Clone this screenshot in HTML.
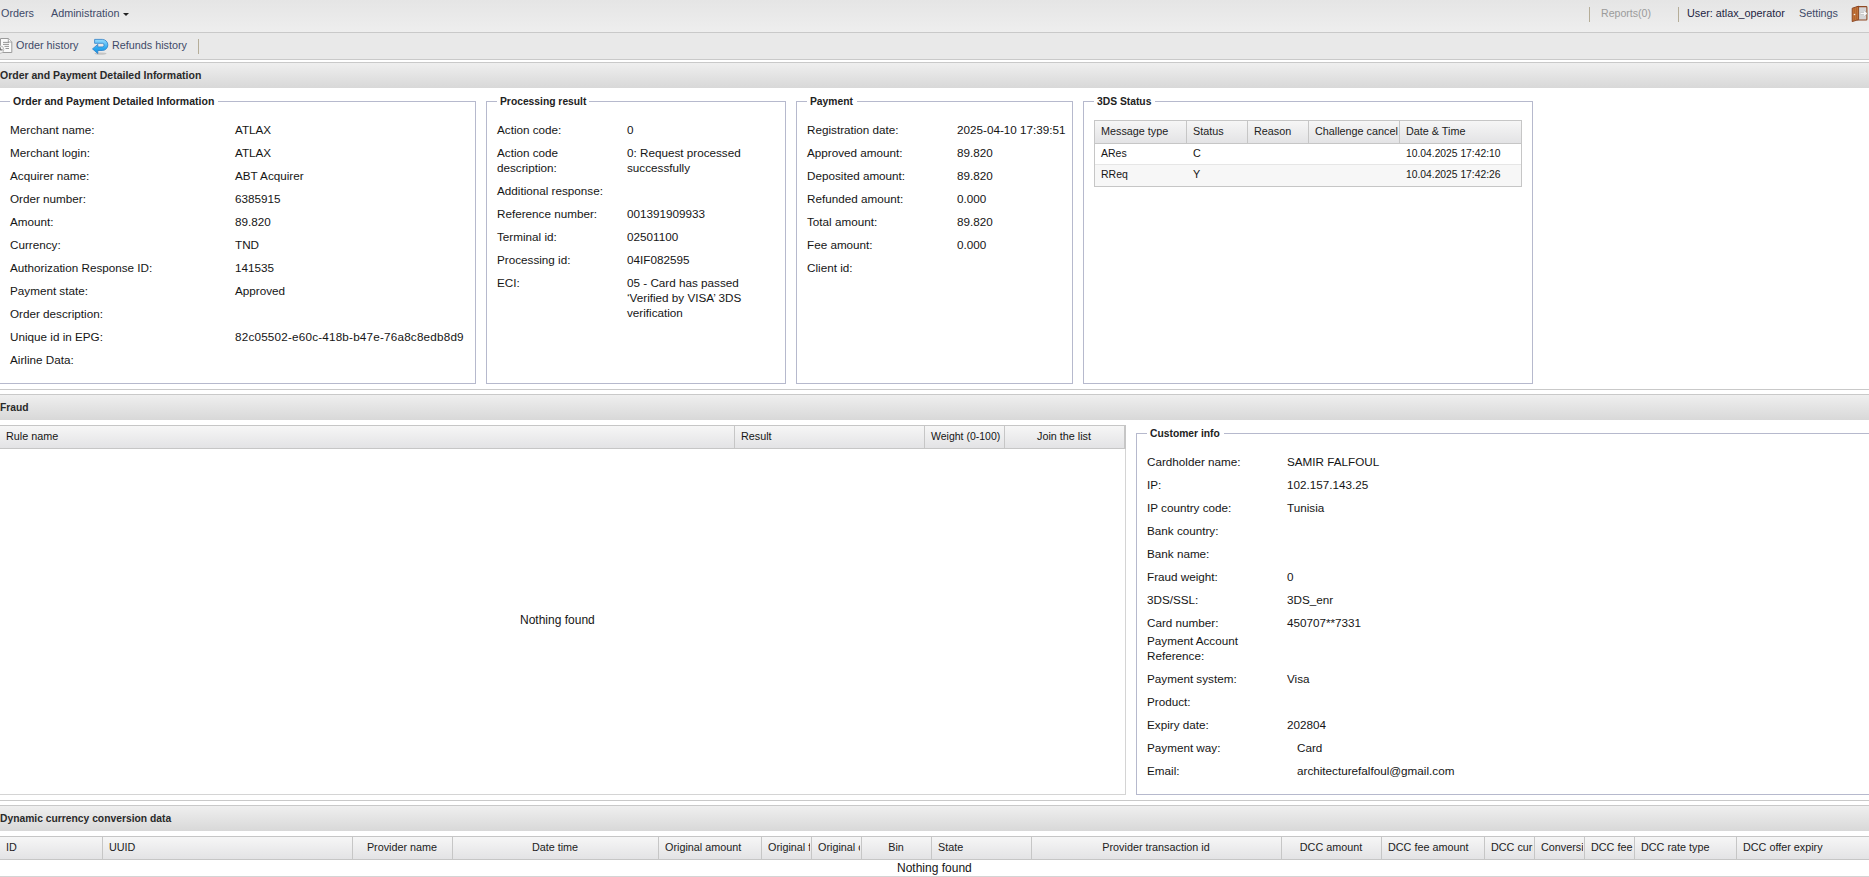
<!DOCTYPE html>
<html><head><meta charset="utf-8"><title>Order details</title>
<style>
html,body{margin:0;padding:0;background:#fff;width:1869px;height:877px;overflow:hidden;position:relative}
body{font-family:"Liberation Sans",sans-serif}
.t{position:absolute;white-space:nowrap}
.r{position:absolute}
</style></head><body>
<div class="r" style="left:0px;top:0px;width:1869px;height:32px;background:linear-gradient(#e5e5e5,#eeeeee)"></div>
<div class="r" style="left:0px;top:32px;width:1869px;height:1px;background:#c9c9c9"></div>
<div class="t" style="left:1px;top:5.76px;font-size:10.8px;line-height:15px;color:#3e4a68;">Orders</div>
<div class="t" style="left:51px;top:5.76px;font-size:10.8px;line-height:15px;color:#3e4a68;">Administration</div>
<div class="r" style="left:123px;top:13px;width:0;height:0;border-left:3px solid transparent;border-right:3px solid transparent;border-top:3px solid #222"></div>
<div class="r" style="left:1589px;top:7px;width:1px;height:15px;background:#b5ad98"></div>
<div class="t" style="left:1601px;top:5.83px;font-size:10.6px;line-height:15px;color:#9b9b9b;">Reports(0)</div>
<div class="r" style="left:1678px;top:7px;width:1px;height:15px;background:#b5ad98"></div>
<div class="t" style="left:1687px;top:5.76px;font-size:10.8px;line-height:15px;color:#1d2442;">User: atlax_operator</div>
<div class="t" style="left:1799px;top:5.76px;font-size:10.8px;line-height:15px;color:#3e4a68;">Settings</div>
<svg class="r" style="left:1845px;top:2px" width="24" height="24" viewBox="0 0 24 24">
<rect x="11.9" y="4.6" width="10" height="13.4" rx="0.8" fill="#d4d6d8" stroke="#8f4a24" stroke-width="1.1"/>
<polygon points="7.2,6.2 13.6,4.2 13.6,17.6 7.2,19.6" fill="#c27338" stroke="#86401c" stroke-width="0.9"/>
<line x1="9.4" y1="6" x2="9.4" y2="18.5" stroke="#a85a2a" stroke-width="0.6"/>
<line x1="11.5" y1="5.3" x2="11.5" y2="18" stroke="#a85a2a" stroke-width="0.6"/>
<circle cx="9.5" cy="12.5" r="0.8" fill="#f0f0f0"/>
<path d="M15.5 11.5 H21 M19 9.5 L21.2 11.5 L19 13.5" stroke="#9a9a9a" stroke-width="2.4" fill="none" opacity="0.6"/>
<path d="M15.5 11.5 H21 M19 9.5 L21.2 11.5 L19 13.5" stroke="#fafafa" stroke-width="1.3" fill="none"/>
</svg>
<div class="r" style="left:0px;top:33px;width:1869px;height:26px;background:#e9e9e9"></div>
<div class="r" style="left:0px;top:59px;width:1869px;height:1px;background:#c9c9c9"></div>
<div class="r" style="left:0px;top:60px;width:1869px;height:2px;background:#fff"></div>
<div class="r" style="left:0px;top:62px;width:1869px;height:1px;background:#c9c9c9"></div>
<svg class="r" style="left:0px;top:35px" width="16" height="22" viewBox="0 0 16 22">
<path d="M0.5 3.5 H8.5 L11.8 6.8 V17.5 H0.5 Z" fill="#fafafa" stroke="#9c9c9c" stroke-width="1"/>
<path d="M8.3 3.5 V7 H11.8" fill="#fff" stroke="#9c9c9c" stroke-width="0.9"/>
<path d="M3 7.4 H9 M3 9.4 H9 M4.5 11.4 H9 M5.5 13.5 H9" stroke="#8a8a8a" stroke-width="0.9"/>
<circle cx="0" cy="14.6" r="3.8" fill="#f4f4f4" stroke="#b8b8b8" stroke-width="0.9"/>
<path d="M0.2 12.3 V14.9 H2.6" stroke="#555" stroke-width="1" fill="none"/>
</svg>
<div class="t" style="left:16px;top:37.76px;font-size:10.8px;line-height:15px;color:#3e4a68;">Order history</div>
<svg class="r" style="left:88px;top:35px" width="24" height="22" viewBox="0 0 24 22">
<defs><linearGradient id="rg" x1="0" y1="0" x2="0" y2="1"><stop offset="0" stop-color="#98dcfd"/><stop offset="0.6" stop-color="#2eaaf0"/><stop offset="1" stop-color="#1590e0"/></linearGradient></defs>
<ellipse cx="12.5" cy="18.6" rx="6" ry="1.1" fill="#c4c4c4"/>
<path d="M6.6 4.4 H14.3 A5.55 5.55 0 0 1 14.3 15.5 H9.8 V18.6 L4.5 13.9 L9.8 9.4 V11.9 H14.3 A1.8 1.8 0 0 0 14.3 8.3 H6.6 Z" fill="url(#rg)" stroke="#2d7fc6" stroke-width="0.8" stroke-linejoin="round"/>
</svg>
<div class="t" style="left:112px;top:37.76px;font-size:10.8px;line-height:15px;color:#3e4a68;">Refunds history</div>
<div class="r" style="left:198px;top:39px;width:1px;height:15px;background:#b5ad98"></div>
<div class="r" style="left:0px;top:63px;width:1869px;height:25px;background:linear-gradient(#efefef,#d8d8d8)"></div>
<div class="t" style="left:0px;top:68.06px;font-size:10.5px;line-height:15px;color:#2a2a2a;font-weight:bold;">Order and Payment Detailed Information</div>
<div class="r" style="left:-1px;top:101px;width:477px;height:283px;box-sizing:border-box;border:1px solid #b6b9cd"></div>
<div class="r" style="left:10px;top:99px;width:208px;height:4px;background:#fff"></div>
<div class="t" style="left:13px;top:94.06px;font-size:10.5px;line-height:15px;color:#222;font-weight:bold;">Order and Payment Detailed Information</div>
<div class="r" style="left:486px;top:101px;width:300px;height:283px;box-sizing:border-box;border:1px solid #b6b9cd"></div>
<div class="r" style="left:497px;top:99px;width:92px;height:4px;background:#fff"></div>
<div class="t" style="left:500px;top:94.13px;font-size:10.3px;line-height:15px;color:#222;font-weight:bold;">Processing result</div>
<div class="r" style="left:796px;top:101px;width:277px;height:283px;box-sizing:border-box;border:1px solid #b6b9cd"></div>
<div class="r" style="left:807px;top:99px;width:50px;height:4px;background:#fff"></div>
<div class="t" style="left:810px;top:94.13px;font-size:10.3px;line-height:15px;color:#222;font-weight:bold;">Payment</div>
<div class="r" style="left:1083px;top:101px;width:450px;height:283px;box-sizing:border-box;border:1px solid #b6b9cd"></div>
<div class="r" style="left:1094px;top:99px;width:61px;height:4px;background:#fff"></div>
<div class="t" style="left:1097px;top:94.13px;font-size:10.3px;line-height:15px;color:#222;font-weight:bold;">3DS Status</div>
<div class="t" style="left:10px;top:122.44px;font-size:11.7px;line-height:15px;color:#151515;">Merchant name:</div>
<div class="t" style="left:235px;top:122.44px;font-size:11.7px;line-height:15px;color:#151515;">ATLAX</div>
<div class="t" style="left:10px;top:145.44px;font-size:11.7px;line-height:15px;color:#151515;">Merchant login:</div>
<div class="t" style="left:235px;top:145.44px;font-size:11.7px;line-height:15px;color:#151515;">ATLAX</div>
<div class="t" style="left:10px;top:168.44px;font-size:11.7px;line-height:15px;color:#151515;">Acquirer name:</div>
<div class="t" style="left:235px;top:168.44px;font-size:11.7px;line-height:15px;color:#151515;">ABT Acquirer</div>
<div class="t" style="left:10px;top:191.44px;font-size:11.7px;line-height:15px;color:#151515;">Order number:</div>
<div class="t" style="left:235px;top:191.44px;font-size:11.7px;line-height:15px;color:#151515;">6385915</div>
<div class="t" style="left:10px;top:214.44px;font-size:11.7px;line-height:15px;color:#151515;">Amount:</div>
<div class="t" style="left:235px;top:214.44px;font-size:11.7px;line-height:15px;color:#151515;">89.820</div>
<div class="t" style="left:10px;top:237.44px;font-size:11.7px;line-height:15px;color:#151515;">Currency:</div>
<div class="t" style="left:235px;top:237.44px;font-size:11.7px;line-height:15px;color:#151515;">TND</div>
<div class="t" style="left:10px;top:260.44px;font-size:11.7px;line-height:15px;color:#151515;">Authorization Response ID:</div>
<div class="t" style="left:235px;top:260.44px;font-size:11.7px;line-height:15px;color:#151515;">141535</div>
<div class="t" style="left:10px;top:283.44px;font-size:11.7px;line-height:15px;color:#151515;">Payment state:</div>
<div class="t" style="left:235px;top:283.44px;font-size:11.7px;line-height:15px;color:#151515;">Approved</div>
<div class="t" style="left:10px;top:306.44px;font-size:11.7px;line-height:15px;color:#151515;">Order description:</div>
<div class="t" style="left:10px;top:329.44px;font-size:11.7px;line-height:15px;color:#151515;">Unique id in EPG:</div>
<div class="t" style="left:235px;top:329.44px;font-size:11.7px;line-height:15px;color:#151515;letter-spacing:0.2px">82c05502-e60c-418b-b47e-76a8c8edb8d9</div>
<div class="t" style="left:10px;top:352.44px;font-size:11.7px;line-height:15px;color:#151515;">Airline Data:</div>
<div class="t" style="left:497px;top:122.44px;font-size:11.7px;line-height:15px;color:#151515;">Action code:</div>
<div class="t" style="left:627px;top:122.44px;font-size:11.7px;line-height:15px;color:#151515;">0</div>
<div class="t" style="left:497px;top:145.44px;font-size:11.7px;line-height:15px;color:#151515;">Action code</div>
<div class="t" style="left:497px;top:160.44px;font-size:11.7px;line-height:15px;color:#151515;">description:</div>
<div class="t" style="left:627px;top:145.44px;font-size:11.7px;line-height:15px;color:#151515;">0: Request processed</div>
<div class="t" style="left:627px;top:160.44px;font-size:11.7px;line-height:15px;color:#151515;">successfully</div>
<div class="t" style="left:497px;top:183.44px;font-size:11.7px;line-height:15px;color:#151515;">Additional response:</div>
<div class="t" style="left:497px;top:206.44px;font-size:11.7px;line-height:15px;color:#151515;">Reference number:</div>
<div class="t" style="left:627px;top:206.44px;font-size:11.7px;line-height:15px;color:#151515;">001391909933</div>
<div class="t" style="left:497px;top:229.44px;font-size:11.7px;line-height:15px;color:#151515;">Terminal id:</div>
<div class="t" style="left:627px;top:229.44px;font-size:11.7px;line-height:15px;color:#151515;">02501100</div>
<div class="t" style="left:497px;top:252.44px;font-size:11.7px;line-height:15px;color:#151515;">Processing id:</div>
<div class="t" style="left:627px;top:252.44px;font-size:11.7px;line-height:15px;color:#151515;">04IF082595</div>
<div class="t" style="left:497px;top:275.44px;font-size:11.7px;line-height:15px;color:#151515;">ECI:</div>
<div class="t" style="left:627px;top:275.44px;font-size:11.7px;line-height:15px;color:#151515;">05 - Card has passed</div>
<div class="t" style="left:627px;top:290.44px;font-size:11.7px;line-height:15px;color:#151515;">‘Verified by VISA’ 3DS</div>
<div class="t" style="left:627px;top:305.44px;font-size:11.7px;line-height:15px;color:#151515;">verification</div>
<div class="t" style="left:807px;top:122.44px;font-size:11.7px;line-height:15px;color:#151515;">Registration date:</div>
<div class="t" style="left:957px;top:122.44px;font-size:11.7px;line-height:15px;color:#151515;">2025-04-10 17:39:51</div>
<div class="t" style="left:807px;top:145.44px;font-size:11.7px;line-height:15px;color:#151515;">Approved amount:</div>
<div class="t" style="left:957px;top:145.44px;font-size:11.7px;line-height:15px;color:#151515;">89.820</div>
<div class="t" style="left:807px;top:168.44px;font-size:11.7px;line-height:15px;color:#151515;">Deposited amount:</div>
<div class="t" style="left:957px;top:168.44px;font-size:11.7px;line-height:15px;color:#151515;">89.820</div>
<div class="t" style="left:807px;top:191.44px;font-size:11.7px;line-height:15px;color:#151515;">Refunded amount:</div>
<div class="t" style="left:957px;top:191.44px;font-size:11.7px;line-height:15px;color:#151515;">0.000</div>
<div class="t" style="left:807px;top:214.44px;font-size:11.7px;line-height:15px;color:#151515;">Total amount:</div>
<div class="t" style="left:957px;top:214.44px;font-size:11.7px;line-height:15px;color:#151515;">89.820</div>
<div class="t" style="left:807px;top:237.44px;font-size:11.7px;line-height:15px;color:#151515;">Fee amount:</div>
<div class="t" style="left:957px;top:237.44px;font-size:11.7px;line-height:15px;color:#151515;">0.000</div>
<div class="t" style="left:807px;top:260.44px;font-size:11.7px;line-height:15px;color:#151515;">Client id:</div>
<div class="r" style="left:1094px;top:120px;width:428px;height:67px;box-sizing:border-box;border:1px solid #c6c6c6;background:#fff"></div>
<div class="r" style="left:1095px;top:121px;width:426px;height:22px;background:linear-gradient(#f6f6f6,#e3e3e5)"></div>
<div class="r" style="left:1095px;top:143px;width:426px;height:1px;background:#c6c6c6"></div>
<div class="r" style="left:1186px;top:121px;width:1px;height:22px;background:#c6c6c6"></div>
<div class="r" style="left:1247px;top:121px;width:1px;height:22px;background:#c6c6c6"></div>
<div class="r" style="left:1308px;top:121px;width:1px;height:22px;background:#c6c6c6"></div>
<div class="r" style="left:1399px;top:121px;width:1px;height:22px;background:#c6c6c6"></div>
<div class="r" style="left:1095px;top:165px;width:426px;height:21px;background:#f7f7f7"></div>
<div class="r" style="left:1095px;top:164px;width:426px;height:1px;background:#e6e6e6"></div>
<div class="t" style="left:1101px;top:123.76px;font-size:10.8px;line-height:15px;color:#222;">Message type</div>
<div class="t" style="left:1193px;top:123.76px;font-size:10.8px;line-height:15px;color:#222;">Status</div>
<div class="t" style="left:1254px;top:123.76px;font-size:10.8px;line-height:15px;color:#222;">Reason</div>
<div class="t" style="left:1315px;top:123.76px;font-size:10.8px;line-height:15px;color:#222;">Challenge cancel</div>
<div class="t" style="left:1406px;top:123.76px;font-size:10.8px;line-height:15px;color:#222;">Date &amp; Time</div>
<div class="t" style="left:1101px;top:145.86px;font-size:10.5px;line-height:15px;color:#151515;">ARes</div>
<div class="t" style="left:1193px;top:145.76px;font-size:10.8px;line-height:15px;color:#151515;">C</div>
<div class="t" style="left:1406px;top:145.93px;font-size:10.3px;line-height:15px;color:#151515;">10.04.2025 17:42:10</div>
<div class="t" style="left:1101px;top:166.86px;font-size:10.5px;line-height:15px;color:#151515;">RReq</div>
<div class="t" style="left:1193px;top:166.76px;font-size:10.8px;line-height:15px;color:#151515;">Y</div>
<div class="t" style="left:1406px;top:166.93px;font-size:10.3px;line-height:15px;color:#151515;">10.04.2025 17:42:26</div>
<div class="r" style="left:0px;top:389px;width:1869px;height:1px;background:#c9c9c9"></div>
<div class="r" style="left:0px;top:394px;width:1869px;height:1px;background:#c9c9c9"></div>
<div class="r" style="left:0px;top:395px;width:1869px;height:25px;background:linear-gradient(#efefef,#d8d8d8)"></div>
<div class="t" style="left:0px;top:400.13px;font-size:10.3px;line-height:15px;color:#2a2a2a;font-weight:bold;">Fraud</div>
<div class="r" style="left:0px;top:425px;width:1126px;height:24px;background:linear-gradient(#f6f6f6,#e3e3e5);border-top:1px solid #c6c6c6;border-bottom:1px solid #c6c6c6;box-sizing:border-box"></div>
<div class="r" style="left:1124px;top:425px;width:2px;height:24px;background:#c6c6c6"></div>
<div class="r" style="left:734px;top:426px;width:1px;height:22px;background:#c6c6c6"></div>
<div class="r" style="left:924px;top:426px;width:1px;height:22px;background:#c6c6c6"></div>
<div class="r" style="left:1004px;top:426px;width:1px;height:22px;background:#c6c6c6"></div>
<div class="t" style="left:6px;top:428.76px;font-size:10.8px;line-height:15px;color:#151515;">Rule name</div>
<div class="t" style="left:741px;top:428.76px;font-size:10.8px;line-height:15px;color:#151515;">Result</div>
<div class="t" style="left:931px;top:428.86px;font-size:10.5px;line-height:15px;color:#151515;">Weight (0-100)</div>
<div class="t" style="left:1037px;top:428.76px;font-size:10.8px;line-height:15px;color:#151515;">Join the list</div>
<div class="r" style="left:1125px;top:449px;width:1px;height:346px;background:#d4d4d4"></div>
<div class="r" style="left:0px;top:794px;width:1126px;height:1px;background:#d4d4d4"></div>
<div class="t" style="left:520px;top:613.34px;font-size:12.0px;line-height:15px;color:#151515;">Nothing found</div>
<div class="r" style="left:1136px;top:433px;width:745px;height:362px;box-sizing:border-box;border:1px solid #b6b9cd"></div>
<div class="r" style="left:1147px;top:431px;width:77px;height:4px;background:#fff"></div>
<div class="t" style="left:1150px;top:426.13px;font-size:10.3px;line-height:15px;color:#222;font-weight:bold;">Customer info</div>
<div class="t" style="left:1147px;top:454.44px;font-size:11.7px;line-height:15px;color:#151515;">Cardholder name:</div>
<div class="t" style="left:1287px;top:454.44px;font-size:11.7px;line-height:15px;color:#151515;">SAMIR FALFOUL</div>
<div class="t" style="left:1147px;top:477.44px;font-size:11.7px;line-height:15px;color:#151515;">IP:</div>
<div class="t" style="left:1287px;top:477.44px;font-size:11.7px;line-height:15px;color:#151515;">102.157.143.25</div>
<div class="t" style="left:1147px;top:500.44px;font-size:11.7px;line-height:15px;color:#151515;">IP country code:</div>
<div class="t" style="left:1287px;top:500.44px;font-size:11.7px;line-height:15px;color:#151515;">Tunisia</div>
<div class="t" style="left:1147px;top:523.44px;font-size:11.7px;line-height:15px;color:#151515;">Bank country:</div>
<div class="t" style="left:1147px;top:546.44px;font-size:11.7px;line-height:15px;color:#151515;">Bank name:</div>
<div class="t" style="left:1147px;top:569.44px;font-size:11.7px;line-height:15px;color:#151515;">Fraud weight:</div>
<div class="t" style="left:1287px;top:569.44px;font-size:11.7px;line-height:15px;color:#151515;">0</div>
<div class="t" style="left:1147px;top:592.44px;font-size:11.7px;line-height:15px;color:#151515;">3DS/SSL:</div>
<div class="t" style="left:1287px;top:592.44px;font-size:11.7px;line-height:15px;color:#151515;">3DS_enr</div>
<div class="t" style="left:1147px;top:615.44px;font-size:11.7px;line-height:15px;color:#151515;">Card number:</div>
<div class="t" style="left:1287px;top:615.44px;font-size:11.7px;line-height:15px;color:#151515;">450707**7331</div>
<div class="t" style="left:1147px;top:633.44px;font-size:11.7px;line-height:15px;color:#151515;">Payment Account</div>
<div class="t" style="left:1147px;top:648.44px;font-size:11.7px;line-height:15px;color:#151515;">Reference:</div>
<div class="t" style="left:1147px;top:671.44px;font-size:11.7px;line-height:15px;color:#151515;">Payment system:</div>
<div class="t" style="left:1287px;top:671.44px;font-size:11.7px;line-height:15px;color:#151515;">Visa</div>
<div class="t" style="left:1147px;top:694.44px;font-size:11.7px;line-height:15px;color:#151515;">Product:</div>
<div class="t" style="left:1147px;top:717.44px;font-size:11.7px;line-height:15px;color:#151515;">Expiry date:</div>
<div class="t" style="left:1287px;top:717.44px;font-size:11.7px;line-height:15px;color:#151515;">202804</div>
<div class="t" style="left:1147px;top:740.44px;font-size:11.7px;line-height:15px;color:#151515;">Payment way:</div>
<div class="t" style="left:1297px;top:740.44px;font-size:11.7px;line-height:15px;color:#151515;">Card</div>
<div class="t" style="left:1147px;top:763.44px;font-size:11.7px;line-height:15px;color:#151515;">Email:</div>
<div class="t" style="left:1297px;top:763.44px;font-size:11.7px;line-height:15px;color:#151515;">architecturefalfoul@gmail.com</div>
<div class="r" style="left:0px;top:800px;width:1869px;height:1px;background:#c9c9c9"></div>
<div class="r" style="left:0px;top:805px;width:1869px;height:1px;background:#c9c9c9"></div>
<div class="r" style="left:0px;top:806px;width:1869px;height:25px;background:linear-gradient(#efefef,#d8d8d8)"></div>
<div class="t" style="left:0px;top:811.13px;font-size:10.3px;line-height:15px;color:#2a2a2a;font-weight:bold;">Dynamic currency conversion data</div>
<div class="r" style="left:0px;top:836px;width:1869px;height:24px;background:linear-gradient(#f6f6f6,#e3e3e5);border-top:1px solid #c6c6c6;border-bottom:1px solid #c6c6c6;box-sizing:border-box"></div>
<div class="r" style="left:102px;top:837px;width:1px;height:22px;background:#c6c6c6"></div>
<div class="r" style="left:352px;top:837px;width:1px;height:22px;background:#c6c6c6"></div>
<div class="r" style="left:452px;top:837px;width:1px;height:22px;background:#c6c6c6"></div>
<div class="r" style="left:658px;top:837px;width:1px;height:22px;background:#c6c6c6"></div>
<div class="r" style="left:761px;top:837px;width:1px;height:22px;background:#c6c6c6"></div>
<div class="r" style="left:811px;top:837px;width:1px;height:22px;background:#c6c6c6"></div>
<div class="r" style="left:861px;top:837px;width:1px;height:22px;background:#c6c6c6"></div>
<div class="r" style="left:931px;top:837px;width:1px;height:22px;background:#c6c6c6"></div>
<div class="r" style="left:1031px;top:837px;width:1px;height:22px;background:#c6c6c6"></div>
<div class="r" style="left:1281px;top:837px;width:1px;height:22px;background:#c6c6c6"></div>
<div class="r" style="left:1381px;top:837px;width:1px;height:22px;background:#c6c6c6"></div>
<div class="r" style="left:1484px;top:837px;width:1px;height:22px;background:#c6c6c6"></div>
<div class="r" style="left:1534px;top:837px;width:1px;height:22px;background:#c6c6c6"></div>
<div class="r" style="left:1584px;top:837px;width:1px;height:22px;background:#c6c6c6"></div>
<div class="r" style="left:1634px;top:837px;width:1px;height:22px;background:#c6c6c6"></div>
<div class="r" style="left:1736px;top:837px;width:1px;height:22px;background:#c6c6c6"></div>
<div class="t" style="left:6px;width:95px;overflow:hidden;top:839.76px;font-size:10.8px;line-height:15px;color:#222">ID</div>
<div class="t" style="left:109px;width:242px;overflow:hidden;top:839.76px;font-size:10.8px;line-height:15px;color:#222">UUID</div>
<div class="t" style="left:352px;width:100px;text-align:center;top:839.76px;font-size:10.8px;line-height:15px;color:#222">Provider name</div>
<div class="t" style="left:452px;width:206px;text-align:center;top:839.76px;font-size:10.8px;line-height:15px;color:#222">Date time</div>
<div class="t" style="left:665px;width:95px;overflow:hidden;top:839.76px;font-size:10.8px;line-height:15px;color:#222">Original amount</div>
<div class="t" style="left:768px;width:42px;overflow:hidden;top:839.76px;font-size:10.8px;line-height:15px;color:#222">Original f</div>
<div class="t" style="left:818px;width:42px;overflow:hidden;top:839.76px;font-size:10.8px;line-height:15px;color:#222">Original c</div>
<div class="t" style="left:861px;width:70px;text-align:center;top:839.76px;font-size:10.8px;line-height:15px;color:#222">Bin</div>
<div class="t" style="left:938px;width:92px;overflow:hidden;top:839.76px;font-size:10.8px;line-height:15px;color:#222">State</div>
<div class="t" style="left:1031px;width:250px;text-align:center;top:839.76px;font-size:10.8px;line-height:15px;color:#222">Provider transaction id</div>
<div class="t" style="left:1281px;width:100px;text-align:center;top:839.76px;font-size:10.8px;line-height:15px;color:#222">DCC amount</div>
<div class="t" style="left:1388px;width:95px;overflow:hidden;top:839.76px;font-size:10.8px;line-height:15px;color:#222">DCC fee amount</div>
<div class="t" style="left:1491px;width:42px;overflow:hidden;top:839.76px;font-size:10.8px;line-height:15px;color:#222">DCC curr</div>
<div class="t" style="left:1541px;width:42px;overflow:hidden;top:839.76px;font-size:10.8px;line-height:15px;color:#222">Conversi</div>
<div class="t" style="left:1591px;width:42px;overflow:hidden;top:839.76px;font-size:10.8px;line-height:15px;color:#222">DCC fee</div>
<div class="t" style="left:1641px;width:94px;overflow:hidden;top:839.76px;font-size:10.8px;line-height:15px;color:#222">DCC rate type</div>
<div class="t" style="left:1743px;width:125px;overflow:hidden;top:839.76px;font-size:10.8px;line-height:15px;color:#222">DCC offer expiry</div>
<div class="t" style="left:897px;top:861.34px;font-size:12.0px;line-height:15px;color:#151515;">Nothing found</div>
<div class="r" style="left:0px;top:876px;width:1869px;height:1px;background:#d4d4d4"></div>
</body></html>
